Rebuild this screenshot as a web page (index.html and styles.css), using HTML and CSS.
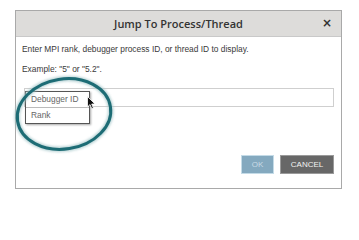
FILE: index.html
```html
<!DOCTYPE html>
<html>
<head>
<meta charset="utf-8">
<link rel="stylesheet" href="styles.css">
</head>
<body>
<div class="dialog">
  <div class="titlebar">
    <span class="title">Jump To Process/Thread</span>
    <span class="close">×</span>
  </div>
  <div class="content">
    <p class="line first">Enter MPI rank, debugger process ID, or thread ID to display.</p>
    <p class="line second">Example: "5" or "5.2".</p>
    <div class="field">
      <div class="input"></div>
      <div class="menu">
        <div class="item">Debugger ID</div>
        <div class="item">Rank</div>
      </div>
      <svg class="cursor" width="9" height="14" viewBox="0 0 9 14">
        <path d="M0.5 0.5 L0.5 11 L3 8.6 L4.8 12.8 L6.4 12.1 L4.7 8 L8 8 Z" fill="#111" stroke="#fff" stroke-width="0.8"/>
      </svg>
    </div>
    <div class="actions">
      <button class="btn ok">OK</button>
      <button class="btn cancel">CANCEL</button>
    </div>
  </div>
</div>
<svg class="ring" width="359" height="203" viewBox="0 0 359 203">
  <defs>
    <filter id="glow" x="-20%" y="-20%" width="140%" height="140%">
      <feGaussianBlur stdDeviation="1.2"/>
    </filter>
  </defs>
  <ellipse cx="64" cy="114" rx="47" ry="35" transform="rotate(-9 64 114)" fill="none" stroke="#9fc3c6" stroke-width="5.5" filter="url(#glow)" opacity="0.7"/>
  <ellipse cx="64" cy="114" rx="47" ry="35" transform="rotate(-9 64 114)" fill="none" stroke="#1d6c75" stroke-width="3"/>
</svg>
</body>
</html>
```
FILE: styles.css
```css
html, body {
  margin: 0;
  padding: 0;
  background: #ffffff;
}
body {
  width: 359px;
  height: 203px;
  position: relative;
  overflow: hidden;
  font-family: "Liberation Sans", Arial, sans-serif;
}
.dialog {
  margin: 10px 0 0 15px;
  width: 325px;
  height: 177px;
  border: 1px solid #a9a9a9;
  background: #fff;
  display: flex;
  flex-direction: column;
}
.titlebar {
  height: 25px;
  flex: none;
  background: #dddcda;
  border-bottom: 1px solid #c9c9c9;
  display: flex;
  align-items: center;
  justify-content: center;
  position: relative;
}
.title {
  font-family: "Open Sans", sans-serif;
  font-weight: 600;
  font-size: 11px;
  color: #333;
}
.close {
  position: absolute;
  right: 9px;
  top: 5px;
  font-family: "DejaVu Sans", sans-serif;
  font-weight: bold;
  font-size: 12px;
  color: #333;
}
.content {
  flex: 1;
  display: flex;
  flex-direction: column;
  padding: 0 7px 0 6px;
}
.line {
  margin: 0;
  font-size: 8.4px;
  line-height: 10px;
  color: #3a3a3a;
}
.first { margin-top: 7px; }
.second { margin-top: 10px; }
.field {
  position: relative;
  margin-top: 14px;
  margin-left: 2px;
}
.input {
  height: 17px;
  border: 1px solid #cfcfcf;
  background: #fff;
}
.menu {
  position: absolute;
  left: 1px;
  top: 3px;
  width: 63px;
  background: #fff;
  border: 1px solid #555;
  box-shadow: 1px 1px 2px rgba(0,0,0,0.35);
}
.item {
  height: 15px;
  line-height: 15px;
  padding-left: 5px;
  font-size: 8.4px;
  color: #666;
}
.item + .item {
  border-top: 1px solid #bbb;
}
.cursor {
  position: absolute;
  left: 63px;
  top: 8px;
}
.actions {
  margin-top: auto;
  margin-bottom: 14px;
  display: flex;
  justify-content: flex-end;
  gap: 6px;
}
.btn {
  height: 19px;
  padding: 0;
  font-family: "Liberation Sans", Arial, sans-serif;
  font-size: 8px;
  border-radius: 0;
}
.ok {
  width: 33px;
  background: #84a9bf;
  border: 1px solid #c4dbe7;
  color: #c9dbe6;
}
.cancel {
  width: 54px;
  background: #676767;
  border: 1px solid #9a9a9a;
  color: #f2f2f2;
}
.ring {
  position: absolute;
  left: 0;
  top: 0;
  pointer-events: none;
}
```
